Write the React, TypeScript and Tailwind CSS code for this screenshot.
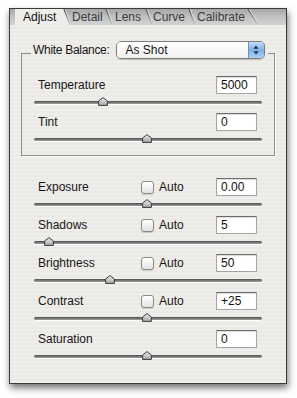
import React from 'react'

type Tab = { label: string; cls: string; active?: boolean }

const tabs: Tab[] = [
  { label: 'Adjust', cls: 'w-[48px] pl-[8px]', active: true },
  { label: 'Detail', cls: 'w-[35px] pl-[2px]' },
  { label: 'Lens', cls: 'w-[33px] pl-[3px]' },
  { label: 'Curve', cls: 'w-[36px] pl-[1px]' },
  { label: 'Calibrate', cls: 'w-[52px] pl-[2px]' },
]

const groupRows = [
  { label: 'Temperature', value: '5000', pos: 64 },
  { label: 'Tint', value: '0', pos: 108 },
]

const rows = [
  { label: 'Exposure', value: '0.00', pos: 108, auto: true },
  { label: 'Shadows', value: '5', pos: 10, auto: true },
  { label: 'Brightness', value: '50', pos: 71, auto: true },
  { label: 'Contrast', value: '+25', pos: 108, auto: true },
  { label: 'Saturation', value: '0', pos: 108, auto: false },
]

function Slant({ active, wide }: { active?: boolean; wide?: boolean }) {
  const w = wide ? 11 : 7
  return (
    <svg width={w} height="16" viewBox={`0 0 ${w} 16`} className="shrink-0">
      <defs>
        <linearGradient id={`sl${w}${active ? 'a' : 'i'}`} x1="0" y1="0" x2="0" y2="1">
          <stop offset="0" stopColor="#4a4a4a" />
          <stop offset="1" stopColor="#9a9a9a" stopOpacity="0.3" />
        </linearGradient>
      </defs>
      {active && <polygon points={`0,0 1,0 ${w},16 0,16`} fill="#efedea" />}
      <line x1="1" y1="0" x2={w} y2="16" stroke={`url(#sl${w}${active ? 'a' : 'i'})`} strokeWidth="1.4" />
      <line x1="2.2" y1="0" x2={w + 1.2} y2="16" stroke="#e4e4e4" strokeWidth="0.8" />
    </svg>
  )
}

function Thumb({ pos }: { pos: number }) {
  return (
    <svg className="absolute top-[3px]" style={{ left: pos }} width="10" height="9" viewBox="0 0 10 9">
      <defs>
        <linearGradient id="th" x1="0" y1="0" x2="0" y2="1">
          <stop offset="0" stopColor="#f0f0f0" />
          <stop offset="1" stopColor="#a4a4a4" />
        </linearGradient>
      </defs>
      <path d="M5 0.6 L9.4 4 L9.4 8.4 L0.6 8.4 L0.6 4 Z" fill="url(#th)" stroke="#3c3c3c" strokeWidth="1" />
    </svg>
  )
}

function Slider({ pos, tall }: { pos: number; tall?: boolean }) {
  return (
    <div className={tall ? 'relative h-[20px] pt-[7px]' : 'relative h-[19px] pt-[7px]'}>
      <div className="h-[3px] rounded-full bg-gradient-to-b from-[#4c4c4c] to-[#a2a2a2] shadow-[0_1px_0_rgba(255,255,255,0.9)]" />
      <Thumb pos={pos} />
    </div>
  )
}

function Field({ value }: { value: string }) {
  return (
    <input
      readOnly
      defaultValue={value}
      className="ml-auto mr-[5px] h-[18px] w-[41px] border border-[#a4a4a4] border-t-[#6c6c6c] bg-white pl-[4px] text-[12px] text-[#111] shadow-[inset_0_1px_1px_rgba(0,0,0,0.15)] outline-none"
    />
  )
}

function Row({ label, value, auto }: { label: string; value: string; auto?: boolean }) {
  return (
    <div className="flex h-[18px] items-center">
      <span className="w-[107px] shrink-0 pl-[4px]">{label}</span>
      {auto && (
        <>
          <span className="h-[13px] w-[13px] shrink-0 rounded-[3px] border border-[#8a8a8a] bg-gradient-to-b from-white to-[#e2e2e2] shadow-[0_1px_1px_rgba(0,0,0,0.15)]" />
          <span className="ml-[5px]">Auto</span>
        </>
      )}
      <Field value={value} />
    </div>
  )
}

export default function App() {
  return (
    <div className="h-[398px] w-[297px] bg-white pl-[9px] pt-[8px] font-['Liberation_Sans',Arial,sans-serif] text-[12px] text-[#161616]">
      <div className="flex h-[376px] w-[278px] flex-col border border-[#3a3a3a] bg-[repeating-linear-gradient(180deg,#f0eeeb_0px,#f0eeeb_2px,#ebe9e6_2px,#ebe9e6_4px)] shadow-[1px_4px_7px_rgba(0,0,0,0.55)]">
        {/* tab strip */}
        <div className="flex h-[16px] shrink-0 items-stretch bg-gradient-to-b from-[#a6a6a6] via-[#c2c2c2] to-[#d3d3d3] pl-[5px]">
          {tabs.map((t) => (
            <React.Fragment key={t.label}>
              <div
                className={`${t.cls} flex items-center leading-none ${
                  t.active ? 'bg-[#efedea] text-[#111]' : 'text-[#3a3a3a]'
                }`}
              >
                {t.label}
              </div>
              <Slant active={t.active} wide={t.label === 'Calibrate'} />
            </React.Fragment>
          ))}
        </div>

        <div className="pt-[16px]">
          <fieldset className="mx-[11px] min-w-0 border border-[#8c8c8c] pb-[5px] pl-[12px] pr-[12px] pt-[11px] shadow-[1px_1px_0_rgba(255,255,255,0.8)]">
            <legend className="-ml-[3px] -mr-[10px] flex items-start whitespace-nowrap pb-[6px] pl-[2px] pr-[3px]">
              <span className="flex h-[18px] shrink-0 items-center tracking-[-0.3px]">White Balance:</span>
              <div className="ml-[6px] flex h-[18px] w-[149px] shrink-0 overflow-hidden rounded-[5px] border border-[#7e7e7e] shadow-[0_1px_1px_rgba(0,0,0,0.2)]">
                <div className="flex flex-1 items-center bg-gradient-to-b from-white to-[#f0f0f0] pl-[9px]">As Shot</div>
                <div className="flex w-[16px] items-center justify-center border-l border-[#6f8fbf] bg-gradient-to-b from-[#c4dcf6] via-[#7fb0ea] to-[#aed0f6]">
                  <svg width="6" height="10" viewBox="0 0 6 10">
                    <path d="M3 0.5 L5.5 3.8 L0.5 3.8 Z" fill="#1e2a3a" />
                    <path d="M3 9.5 L5.5 6.2 L0.5 6.2 Z" fill="#1e2a3a" />
                  </svg>
                </div>
              </div>
            </legend>
            {groupRows.map((r) => (
              <div key={r.label}>
                <Row label={r.label} value={r.value} />
                <Slider pos={r.pos} />
              </div>
            ))}
          </fieldset>

          <div className="px-[24px] pt-[22px]">
            {rows.map((r) => (
              <div key={r.label}>
                <Row label={r.label} value={r.value} auto={r.auto} />
                <Slider pos={r.pos} tall />
              </div>
            ))}
          </div>
        </div>
      </div>
    </div>
  )
}
